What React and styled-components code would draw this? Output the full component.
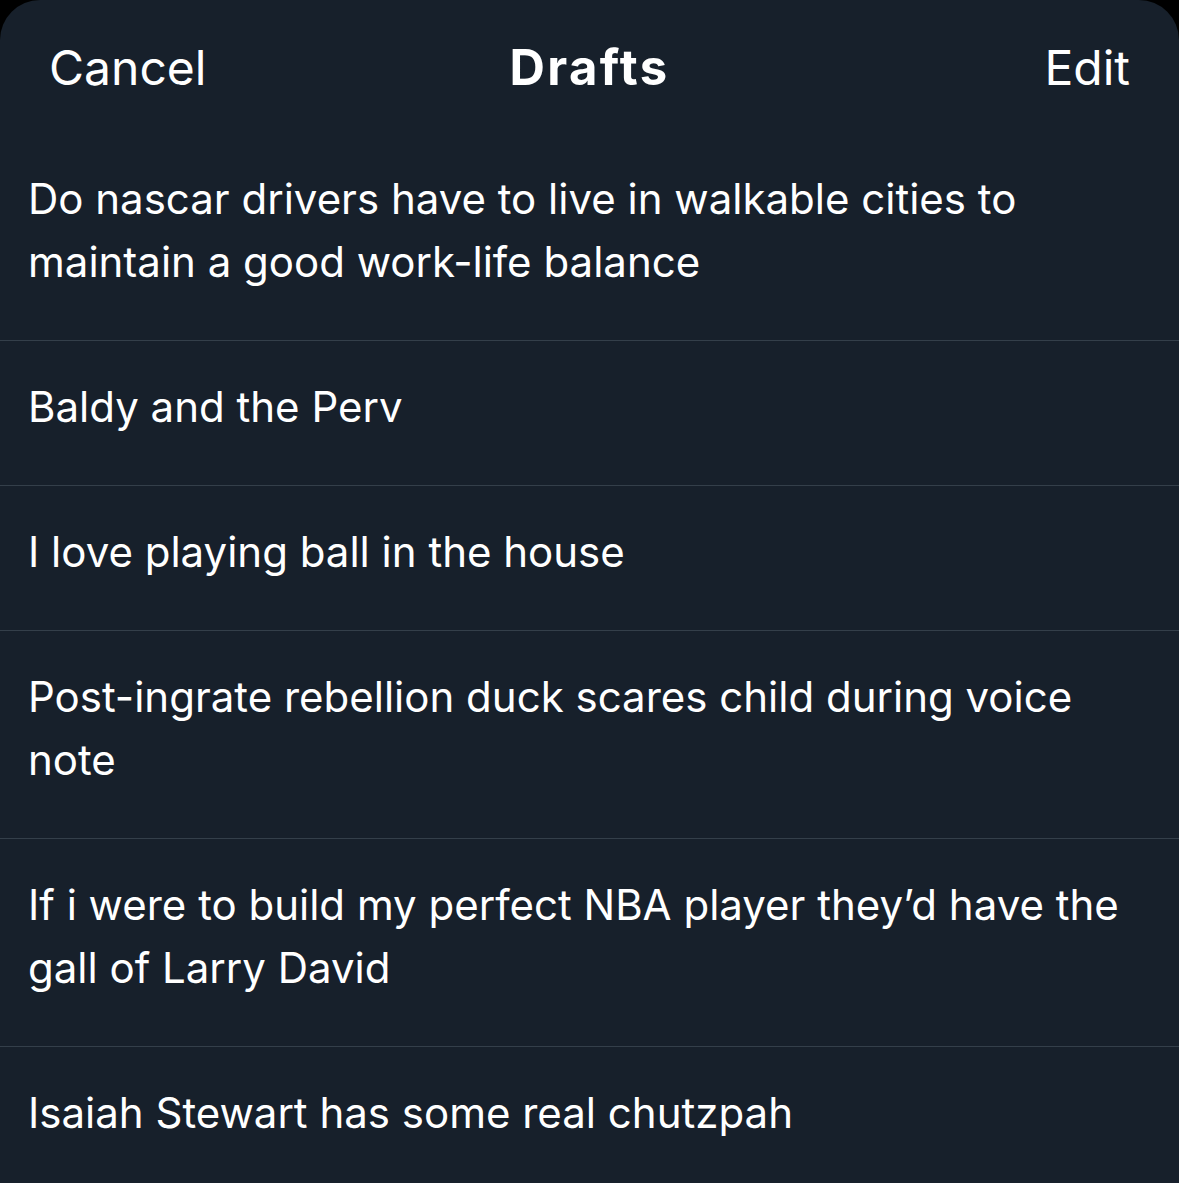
import React from "react";
import styled, { createGlobalStyle } from "styled-components";

const Global = createGlobalStyle`
  html, body { margin: 0; padding: 0; background: #000; }
  body { font-family: Inter, "Noto Sans", "Liberation Sans", sans-serif; -webkit-font-smoothing: antialiased; }
`;

const Sheet = styled.div`
  width: 1179px;
  height: 1183px;
  background: #17202b;
  border-radius: 40px 40px 0 0;
  overflow: hidden;
  color: #ffffff;
`;

const Header = styled.header`
  height: 133px;
  display: grid;
  grid-template-columns: 1fr auto 1fr;
  align-items: center;
  padding: 0 49px 0 49px;
  box-sizing: border-box;
`;

const HeaderButton = styled.button`
  background: none;
  border: 0;
  padding: 0;
  color: #ffffff;
  font-family: inherit;
  font-size: 48px;
  font-weight: 400;
  letter-spacing: 0px;
  justify-self: ${(p) => (p.$right ? "end" : "start")};
  margin-top: 1px;
`;

const Title = styled.h1`
  margin: 0;
  font-size: 49px;
  font-weight: 700;
  letter-spacing: 2.4px;
  margin-top: 1px;
`;

const List = styled.ul`
  list-style: none;
  margin: 0;
  padding: 0;
`;

const Row = styled.li`
  padding: 34px 40px 47px 28px;
  font-size: 42px;
  line-height: 63px;
  letter-spacing: 0px;
  border-bottom: 1px solid #343f4a;
  &:last-child { border-bottom: 0; }
`;

const drafts = [
  "Do nascar drivers have to live in walkable cities to maintain a good work-life balance",
  "Baldy and the Perv",
  "I love playing ball in the house",
  "Post-ingrate rebellion duck scares child during voice note",
  "If i were to build my perfect NBA player they\u2019d have the gall of Larry David",
  "Isaiah Stewart has some real chutzpah",
];

export default function App() {
  return (
    <>
      <Global />
      <Sheet>
        <Header>
          <HeaderButton>Cancel</HeaderButton>
          <Title>Drafts</Title>
          <HeaderButton $right>Edit</HeaderButton>
        </Header>
        <List>
          {drafts.map((d) => (
            <Row key={d}>{d}</Row>
          ))}
        </List>
      </Sheet>
    </>
  );
}
